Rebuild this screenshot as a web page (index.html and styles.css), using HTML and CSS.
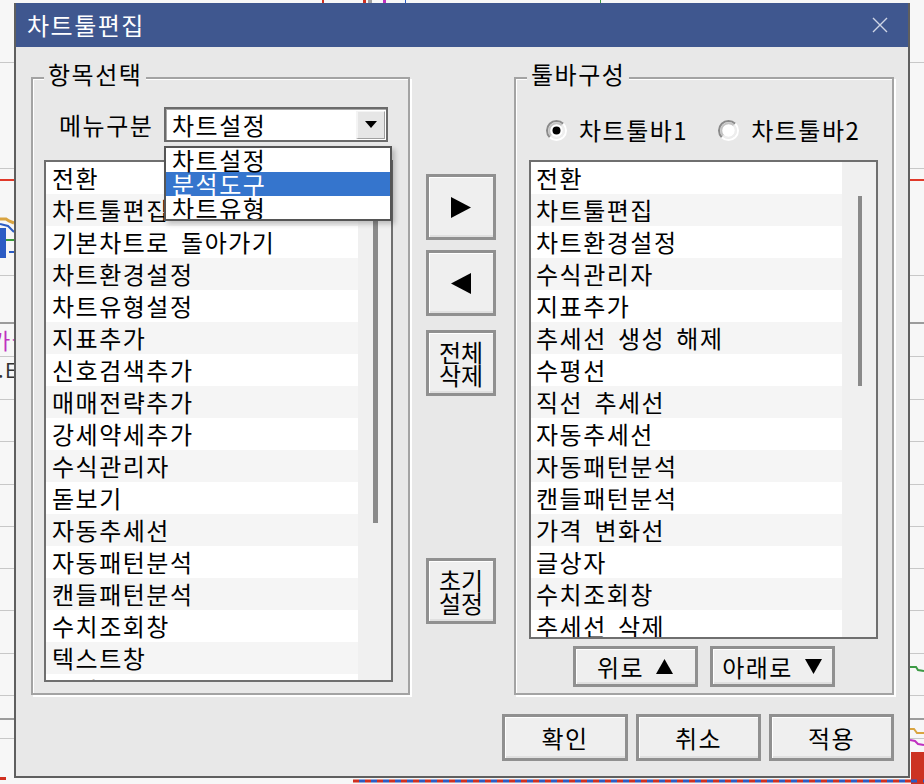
FILE: index.html
```html
<!DOCTYPE html>
<html lang="ko">
<head>
<meta charset="utf-8">
<title>차트툴편집</title>
<link rel="stylesheet" href="styles.css">
</head>
<body>
<div class="desk">
  <svg class="chart" width="924" height="784" viewBox="0 0 924 784">
    <rect width="924" height="784" fill="#f7f7f7"/>
    <g stroke="#c8c8c8" stroke-width="1">
      <line x1="0" x2="924" y1="62.5" y2="62.5"/>
      <line x1="0" x2="924" y1="168.5" y2="168.5"/>
      <line x1="0" x2="924" y1="275.5" y2="275.5"/>
      <line x1="0" x2="924" y1="356.5" y2="356.5"/>
      <line x1="0" x2="924" y1="399.5" y2="399.5"/>
      <line x1="0" x2="924" y1="441.5" y2="441.5"/>
      <line x1="0" x2="924" y1="484.5" y2="484.5"/>
      <line x1="0" x2="924" y1="526.5" y2="526.5"/>
      <line x1="0" x2="924" y1="568.5" y2="568.5"/>
      <line x1="0" x2="924" y1="610.5" y2="610.5"/>
      <line x1="0" x2="924" y1="653.5" y2="653.5"/>
      <line x1="0" x2="924" y1="695.5" y2="695.5"/>
      <line x1="0" x2="924" y1="738.5" y2="738.5"/>
    </g>
    <g stroke="#9c9c9c" stroke-width="2">
      <line x1="0" x2="924" y1="323" y2="323"/>
      <line x1="0" x2="924" y1="719" y2="719"/>
    </g>
    <line x1="0" x2="924" y1="180" y2="180" stroke="#e03a2a" stroke-width="2"/>
    <polyline points="0,219 6,219 9,221 14,223" fill="none" stroke="#d9a441" stroke-width="3"/>
    <polyline points="0,224 8,226 12,230 14,232" fill="none" stroke="#2b5cc4" stroke-width="2"/>
    <rect x="0" y="228" width="6" height="30" fill="#2b5cc4"/>
    <line x1="6" x2="14" y1="240" y2="240" stroke="#3a9a3a" stroke-width="2"/>
    <line x1="9" x2="14" y1="252" y2="252" stroke="#2b5cc4" stroke-width="2"/>
    <text x="-10" y="349" font-family="Noto Sans CJK KR, sans-serif" font-size="22" fill="#c030c0">가권</text>
    <text x="-2" y="378" font-family="Noto Sans CJK KR, sans-serif" font-size="20" fill="#333">.E</text>
    <polyline points="910,667 916,667 918,670 924,671" fill="none" stroke="#3d9a45" stroke-width="2"/>
    <polyline points="910,729 914,729 917,733 924,733" fill="none" stroke="#d9a441" stroke-width="2"/>
    <polyline points="910,740 915,741 918,744 924,745" fill="none" stroke="#c030c0" stroke-width="2"/>
    <rect x="911" y="752" width="13" height="32" fill="#cc3322"/>
    <line x1="353" x2="924" y1="781" y2="781" stroke="#d03020" stroke-width="3" stroke-dasharray="6 6"/>
    <line x1="359" x2="924" y1="781" y2="781" stroke="#2b5cc4" stroke-width="3" stroke-dasharray="6 6"/>
    <rect x="0" y="777" width="6" height="3" fill="#d03020"/>
    <rect x="322" y="0" width="2" height="4" fill="#d03020"/>
    <rect x="363" y="0" width="3" height="4" fill="#d03020"/>
    <rect x="368" y="0" width="4" height="4" fill="#a0a0a0"/>
    <rect x="383" y="0" width="3" height="4" fill="#c030c0"/>
    <rect x="405" y="0" width="1" height="4" fill="#2b5cc4"/>
    <rect x="600" y="0" width="1" height="4" fill="#3d9a45"/>
  </svg>

  <div class="dialog">
    <div class="titlebar">
      <span class="title">차트툴편집</span>
      <svg class="close" width="16" height="16" viewBox="0 0 16 16">
        <path d="M1 1 L15 15 M15 1 L1 15" stroke="#cfd6e6" stroke-width="1.4" fill="none"/>
      </svg>
    </div>

    <div class="content">
      <div class="main">
        <div class="group group-left">
          <span class="legend">항목선택</span>
          <div class="menu-row">
            <span class="menu-label">메뉴구분</span>
            <div class="combo">
              <span class="combo-text">차트설정</span>
              <span class="combo-btn">
                <svg width="12" height="7" viewBox="0 0 12 7"><polygon points="0,0 12,0 6,7" fill="#000"/></svg>
              </span>
            </div>
          </div>
          <div class="list list-left">
            <div class="rows rows-left">
              <div class="row">전환</div>
              <div class="row">차트툴편집</div>
              <div class="row">기본차트로 돌아가기</div>
              <div class="row">차트환경설정</div>
              <div class="row">차트유형설정</div>
              <div class="row">지표추가</div>
              <div class="row">신호검색추가</div>
              <div class="row">매매전략추가</div>
              <div class="row">강세약세추가</div>
              <div class="row">수식관리자</div>
              <div class="row">돋보기</div>
              <div class="row">자동추세선</div>
              <div class="row">자동패턴분석</div>
              <div class="row">캔들패턴분석</div>
              <div class="row">수치조회창</div>
              <div class="row">텍스트창</div>
              <div class="row">패턴검색</div>
            </div>
            <div class="track track-left"><div class="thumb thumb-left"></div></div>
          </div>
        </div>

        <div class="mid">
          <button class="btn btn-mid">
            <svg width="20" height="21" viewBox="0 0 20 21"><polygon points="0,0 20,10.5 0,21" fill="#000"/></svg>
          </button>
          <button class="btn btn-mid btn-gap">
            <svg width="20" height="21" viewBox="0 0 20 21"><polygon points="20,0 0,10.5 20,21" fill="#000"/></svg>
          </button>
          <button class="btn btn-mid btn-gap2 btn-two">전체<br>삭제</button>
          <button class="btn btn-mid btn-reset btn-two">초기<br>설정</button>
        </div>

        <div class="group group-right">
          <span class="legend">툴바구성</span>
          <div class="radio-row">
            <span class="radio">
              <svg width="23" height="23" viewBox="0 0 23 23">
                <circle cx="11.5" cy="11.5" r="6.5" fill="#fff"/>
                <path d="M4.78 18.22 A9.5 9.5 0 0 1 18.22 4.78" stroke="#8a8a8a" stroke-width="2" fill="none"/>
                <path d="M4.78 18.22 A9.5 9.5 0 0 0 18.22 4.78" stroke="#ffffff" stroke-width="2" fill="none"/>
                <path d="M6.2 16.8 A7.5 7.5 0 0 1 16.8 6.2" stroke="#c4c4c4" stroke-width="2" fill="none"/>
                <path d="M6.2 16.8 A7.5 7.5 0 0 0 16.8 6.2" stroke="#eeeeee" stroke-width="2" fill="none"/>
                <circle cx="11.5" cy="11.5" r="4" fill="#000"/>
              </svg>
              <span class="radio-text">차트툴바1</span>
            </span>
            <span class="radio radio-2">
              <svg width="23" height="23" viewBox="0 0 23 23">
                <circle cx="11.5" cy="11.5" r="6.5" fill="#fff"/>
                <path d="M4.78 18.22 A9.5 9.5 0 0 1 18.22 4.78" stroke="#8a8a8a" stroke-width="2" fill="none"/>
                <path d="M4.78 18.22 A9.5 9.5 0 0 0 18.22 4.78" stroke="#ffffff" stroke-width="2" fill="none"/>
                <path d="M6.2 16.8 A7.5 7.5 0 0 1 16.8 6.2" stroke="#c4c4c4" stroke-width="2" fill="none"/>
                <path d="M6.2 16.8 A7.5 7.5 0 0 0 16.8 6.2" stroke="#eeeeee" stroke-width="2" fill="none"/>
              </svg>
              <span class="radio-text">차트툴바2</span>
            </span>
          </div>
          <div class="list list-right">
            <div class="rows rows-right">
              <div class="row">전환</div>
              <div class="row">차트툴편집</div>
              <div class="row">차트환경설정</div>
              <div class="row">수식관리자</div>
              <div class="row">지표추가</div>
              <div class="row">추세선 생성 해제</div>
              <div class="row">수평선</div>
              <div class="row">직선 추세선</div>
              <div class="row">자동추세선</div>
              <div class="row">자동패턴분석</div>
              <div class="row">캔들패턴분석</div>
              <div class="row">가격 변화선</div>
              <div class="row">글상자</div>
              <div class="row">수치조회창</div>
              <div class="row">추세선 삭제</div>
            </div>
            <div class="track track-right"><div class="thumb thumb-right"></div></div>
          </div>
          <div class="updown">
            <button class="btn btn-ud">위로<svg class="tri" width="17" height="15" viewBox="0 0 17 15"><polygon points="8.5,0 17,15 0,15" fill="#000"/></svg></button>
            <button class="btn btn-ud">아래로<svg class="tri" width="17" height="15" viewBox="0 0 17 15"><polygon points="0,0 17,0 8.5,15" fill="#000"/></svg></button>
          </div>
        </div>
      </div>

      <div class="footer">
        <button class="btn btn-foot btn-wide">확인</button>
        <button class="btn btn-foot">취소</button>
        <button class="btn btn-foot">적용</button>
      </div>
    </div>

    <div class="popup">
      <div class="popup-item">차트설정</div>
      <div class="popup-item popup-sel">분석도구</div>
      <div class="popup-item">차트유형</div>
    </div>
  </div>
</div>
</body>
</html>
```

FILE: styles.css
```css
* {
  box-sizing: border-box;
}

html,
body {
  margin: 0;
  padding: 0;
}

body {
  width: 924px;
  height: 784px;
  overflow: hidden;
  font-family: "Noto Sans CJK KR", "Noto Sans", sans-serif;
  font-size: 24px;
  letter-spacing: 1.5px;
  word-spacing: 3px;
  color: #000;
}

.desk {
  position: relative;
  width: 924px;
  height: 784px;
  overflow: hidden;
  background: #f7f7f7;
}

.chart {
  position: absolute;
  left: 0;
  top: 0;
  display: block;
}

.dialog {
  position: absolute;
  left: 14px;
  top: 3px;
  width: 896px;
  height: 775px;
  background: #e8e8e8;
  border: 2px solid #5f5f5f;
  border-top: 0;
}

.titlebar {
  height: 44px;
  background: #3f578f;
  color: #fff;
  display: flex;
  align-items: center;
  justify-content: space-between;
  padding-left: 11px;
  padding-right: 20px;
}

.title {
  line-height: 26px;
}

.close {
  display: block;
}

.content {
  padding: 30px 14px 0 15px;
}

.main {
  display: flex;
  height: 618px;
}

.group {
  position: relative;
  display: flex;
  flex-direction: column;
  border: 2px solid #a3a3a3;
  box-shadow: 2px 2px 0 #ffffff, inset 1px 1px 0 #ffffff;
}

.legend {
  position: absolute;
  top: -18px;
  left: 11px;
  padding: 0 4px;
  background: #e8e8e8;
  line-height: 26px;
}

.group-left {
  width: 379px;
  padding: 28px 15px 11px 11px;
}

.menu-row {
  display: flex;
  align-items: center;
  height: 35px;
  padding-left: 15px;
}

.menu-label {
  width: 105px;
}

.combo {
  width: 224px;
  height: 35px;
  display: flex;
  align-items: center;
  padding-left: 6px;
  background: #fff;
  border: 2px solid #6b6b6b;
  box-shadow: inset 1px 1px 0 #a8a8a8;
}

.combo-text {
  line-height: 28px;
}

.combo-btn {
  margin-left: auto;
  margin-right: 1px;
  width: 29px;
  height: 28px;
  display: flex;
  align-items: center;
  justify-content: center;
  background: #e6e6e6;
  border-left: 2px solid #f4f4f4;
  border-top: 1px solid #f4f4f4;
  border-right: 1px solid #a0a0a0;
  border-bottom: 1px solid #a0a0a0;
}

.combo-btn svg {
  display: block;
}

.list {
  display: flex;
  overflow: hidden;
  background: #f0f0f0;
  border: 2px solid #6f6f6f;
}

.list-left {
  margin-top: 18px;
  flex: 1;
}

.rows {
  flex: none;
}

.rows-left {
  width: 312px;
}

.rows-right {
  width: 311px;
}

.row {
  height: 32px;
  line-height: 32px;
  padding-left: 6px;
  white-space: nowrap;
  background: #fff;
}

.rows-right .row {
  padding-left: 5px;
}

.row:nth-child(even) {
  background: #f5f5f5;
}

.track {
  flex: 1;
  padding-top: 34px;
}

.track-left {
  padding-left: 15px;
}

.track-right {
  padding-left: 16px;
}

.thumb {
  background: #8a8a8a;
}

.thumb-left {
  width: 5px;
  height: 327px;
}

.thumb-right {
  width: 4px;
  height: 190px;
}

.mid {
  width: 104px;
  display: flex;
  flex-direction: column;
  padding-top: 97px;
  padding-left: 16px;
}

.btn {
  display: flex;
  align-items: center;
  justify-content: center;
  padding: 0;
  margin: 0;
  font: inherit;
  letter-spacing: 1.5px;
  word-spacing: 3px;
  color: #000;
  background: #efefef;
  border: 3px solid #909090;
  box-shadow: inset 1px 1px 0 #ffffff, inset 0 -2px 0 #e0e0e0;
}

.btn svg {
  display: block;
}

.btn-mid {
  width: 70px;
  height: 66px;
}

.btn-gap {
  margin-top: 10px;
}

.btn-gap2 {
  margin-top: 14px;
}

.btn-reset {
  margin-top: 162px;
}

.btn-two {
  line-height: 23px;
  letter-spacing: 0;
}

.group-right {
  width: 380px;
  padding: 36px 14px 0 13px;
}

.radio-row {
  height: 30px;
  display: flex;
  align-items: center;
  padding-left: 16px;
}

.radio {
  display: flex;
  align-items: center;
}

.radio svg {
  display: block;
}

.radio-text {
  margin-left: 11px;
  line-height: 28px;
}

.radio-2 {
  margin-left: 29px;
}

.list-right {
  margin-top: 15px;
  height: 479px;
}

.updown {
  display: flex;
  justify-content: center;
  gap: 12px;
  margin-top: 7px;
}

.btn-ud {
  width: 125px;
  height: 41px;
}

.tri {
  margin-left: 12px;
}

.footer {
  display: flex;
  justify-content: flex-end;
  gap: 8px;
  margin-top: 19px;
}

.btn-foot {
  width: 125px;
  height: 47px;
}

.btn-wide {
  width: 126px;
}

.popup {
  position: absolute;
  left: 148px;
  top: 143px;
  width: 228px;
  height: 75px;
  overflow: hidden;
  background: #fff;
  border: 2px solid #555555;
  box-shadow: 3px 3px 5px rgba(0, 0, 0, 0.22);
}

.popup-item {
  height: 24px;
  line-height: 24px;
  padding-left: 6px;
  white-space: nowrap;
}

.popup-sel {
  background: #3575cd;
  color: #fff;
}
```
